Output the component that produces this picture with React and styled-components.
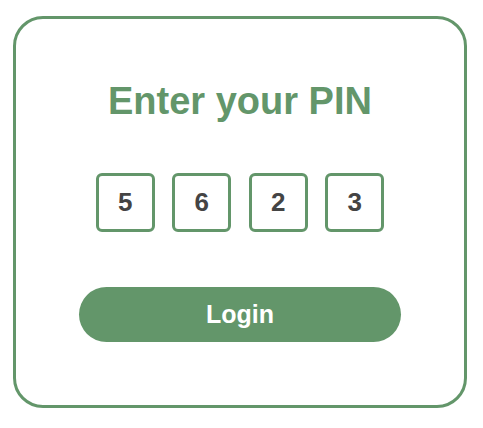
import React, { useState } from 'react';
import styled, { createGlobalStyle } from 'styled-components';

const GlobalStyle = createGlobalStyle`
  body {
    margin: 0;
    background: #ffffff;
    font-family: "Liberation Sans", Arial, sans-serif;
  }
`;

const Page = styled.div`
  padding: 16px 16px 0 13px;
`;

const Card = styled.div`
  width: 454px;
  height: 392px;
  box-sizing: border-box;
  border: 3px solid #63966a;
  border-radius: 30px;
  display: flex;
  flex-direction: column;
  align-items: center;
  padding-top: 61px;
`;

const Titulo = styled.h1`
  margin: 0;
  color: #63966a;
  font-size: 38px;
  font-weight: bold;
  line-height: 43px;
`;

const PinRow = styled.div`
  display: flex;
  gap: 17.5px;
  margin-top: 50px;
`;

const PinBox = styled.div`
  width: 59px;
  height: 59px;
  box-sizing: border-box;
  border: 3px solid #63966a;
  border-radius: 6px;
  display: flex;
  align-items: center;
  justify-content: center;
  color: #444444;
  font-size: 26px;
  font-weight: bold;
`;

const Botao = styled.button`
  margin-top: 55px;
  width: 322px;
  height: 55px;
  border: none;
  border-radius: 28px;
  background-color: #63966a;
  color: #ffffff;
  font-family: "Liberation Sans", Arial, sans-serif;
  font-size: 25px;
  font-weight: bold;
  cursor: pointer;
`;

const App = () => {
  const [pin] = useState(['5', '6', '2', '3']);

  return (
    <Page>
      <GlobalStyle />
      <Card>
        <Titulo>Enter your PIN</Titulo>
        <PinRow>
          {pin.map((d, i) => (
            <PinBox key={i}>{d}</PinBox>
          ))}
        </PinRow>
        <Botao>Login</Botao>
      </Card>
    </Page>
  );
};

export default App;
